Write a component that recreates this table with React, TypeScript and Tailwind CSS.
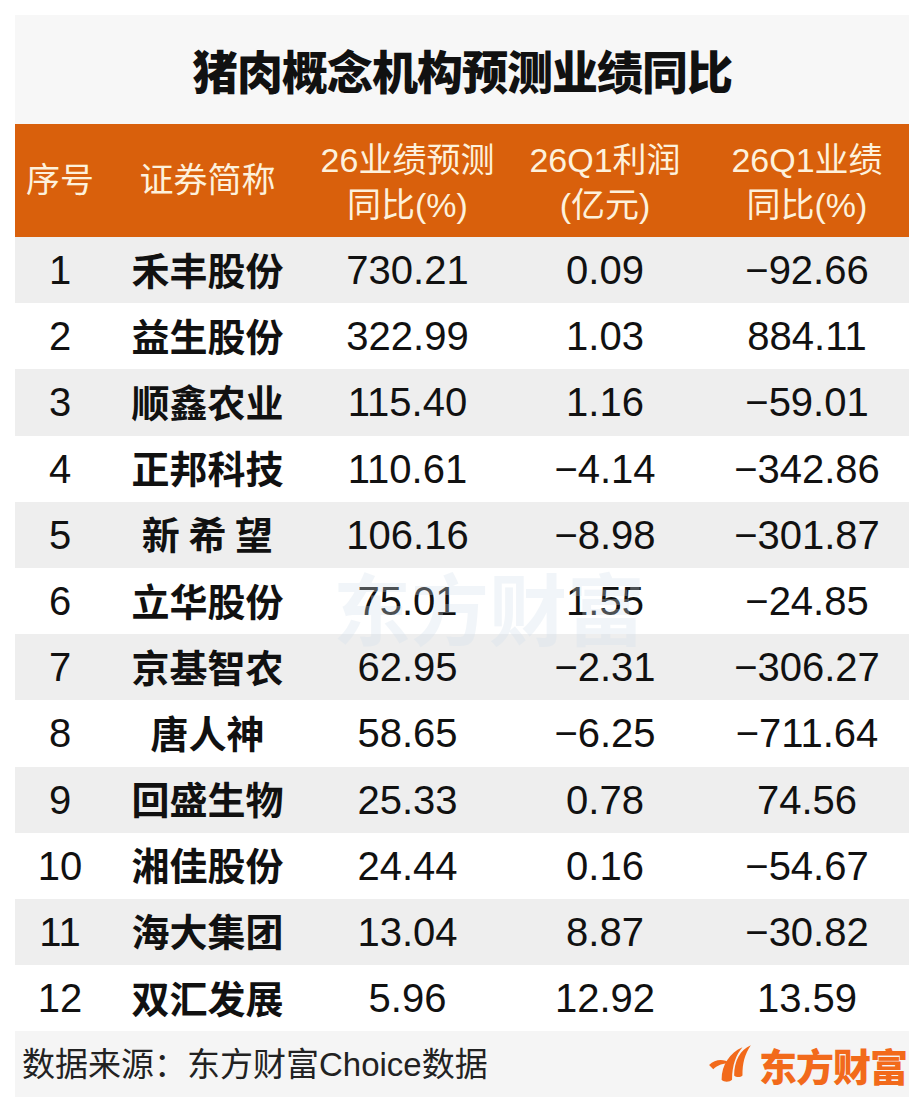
const rows: [string, string, string, string, string][] = [
  ["1", "禾丰股份", "730.21", "0.09", "−92.66"],
  ["2", "益生股份", "322.99", "1.03", "884.11"],
  ["3", "顺鑫农业", "115.40", "1.16", "−59.01"],
  ["4", "正邦科技", "110.61", "−4.14", "−342.86"],
  ["5", "新 希 望", "106.16", "−8.98", "−301.87"],
  ["6", "立华股份", "75.01", "1.55", "−24.85"],
  ["7", "京基智农", "62.95", "−2.31", "−306.27"],
  ["8", "唐人神", "58.65", "−6.25", "−711.64"],
  ["9", "回盛生物", "25.33", "0.78", "74.56"],
  ["10", "湘佳股份", "24.44", "0.16", "−54.67"],
  ["11", "海大集团", "13.04", "8.87", "−30.82"],
  ["12", "双汇发展", "5.96", "12.92", "13.59"],
];

const font = { fontFamily: '"Liberation Sans", "Noto Sans CJK SC", sans-serif' };
const cjk = { fontFamily: '"Noto Sans CJK SC", sans-serif' };

function Flame() {
  return (
    <svg width="48" height="44" viewBox="0 0 46 42" className="mr-1">
      <path d="M2 22 C8 16 16 16 22 20 C16 20 10 22 6 26 Z" fill="#f26a1b" />
      <path d="M14 36 C14 22 22 10 34 5 C28 12 24 22 24 36 C22 38 17 39 14 36 Z" fill="#f26a1b" />
      <path d="M26 32 C26 18 32 7 42 3 C36 12 34 20 34 32 C32 34 28 34 26 32 Z" fill="#f26a1b" />
    </svg>
  );
}

export default function App() {
  return (
    <div className="w-[924px] h-[1112px] bg-white pt-[15px] px-[15px]" style={font}>
      <div className="w-[894px]">
        <div className="h-[109px] bg-[#f7f7f7] flex items-center justify-center">
          <h1 className="text-[46px] font-black text-[#111] tracking-[-1px]" style={cjk}>
            猪肉概念机构预测业绩同比
          </h1>
        </div>

        <div className="h-[113px] bg-[#d9600c] flex items-center text-[#fdf1dc] text-[34px] leading-[45px] text-center">
          <div className="w-[90px]">序号</div>
          <div className="w-[205px]">证券简称</div>
          <div className="w-[195px] pt-1">26业绩预测<br />同比(%)</div>
          <div className="w-[200px] pt-1">26Q1利润<br />(亿元)</div>
          <div className="w-[204px] pt-1">26Q1业绩<br />同比(%)</div>
        </div>

        <div className="relative">
          {rows.map((r, i) => (
            <div
              key={r[0]}
              className={`h-[66.2px] flex items-center text-center text-[40px] text-[#111] ${
                i % 2 === 0 ? "bg-[#eeeeee]" : "bg-white"
              }`}
            >
              <div className="w-[90px]">{r[0]}</div>
              <div className="w-[205px] font-semibold whitespace-pre text-[38px] -mt-1" style={cjk}>
                {r[1]}
              </div>
              <div className="w-[195px]">{r[2]}</div>
              <div className="w-[200px]">{r[3]}</div>
              <div className="w-[204px]">{r[4]}</div>
            </div>
          ))}
          <div
            className="absolute left-[318px] top-[330px] text-[78px] font-bold text-[#d3e0ec] opacity-30 pointer-events-none leading-none"
            style={cjk}
          >
            东方财富
          </div>
        </div>

        <div className="h-[66px] bg-[#f5f5f5] flex items-center justify-between pl-[7px] pr-[2px]">
          <span className="text-[33px] text-[#222]">数据来源：东方财富Choice数据</span>
          <div className="flex items-center">
            <Flame />
            <span className="text-[38px] font-black text-[#f26a1b] tracking-[-1px]" style={cjk}>
              东方财富
            </span>
          </div>
        </div>
      </div>
    </div>
  );
}
